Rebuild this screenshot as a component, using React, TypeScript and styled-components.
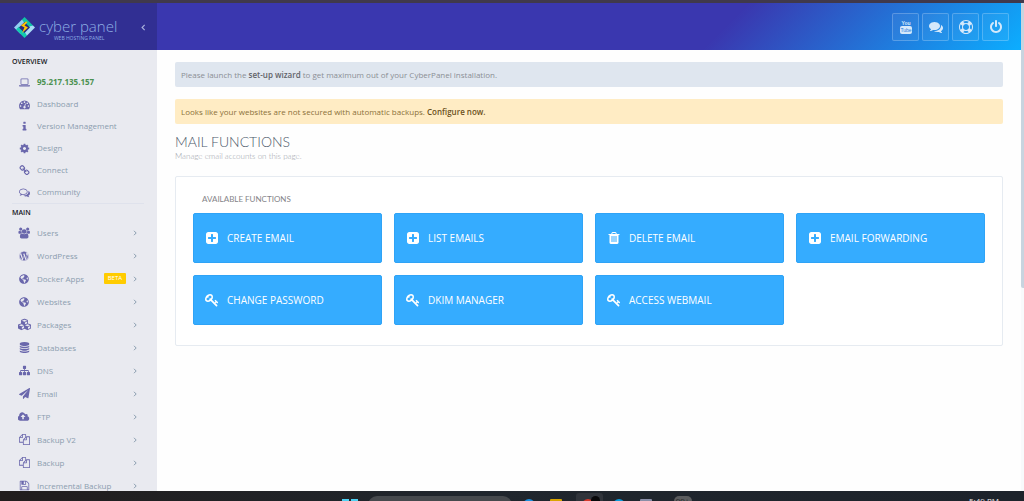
import React from "react";
import styled, { createGlobalStyle } from "styled-components";
import { FaCubes, FaGlobeAmericas, FaWordpress } from "react-icons/fa";

const GlobalStyle = createGlobalStyle`
  *, *::before, *::after { box-sizing: border-box; }
  body {
    margin: 0;
    background: #fefefe;
    font-family: "Open Sans", "Liberation Sans", sans-serif;
    font-size: 8px;
    line-height: 12px;
  }
  h1, h2, h3, p, ul { margin: 0; padding: 0; }
  ul { list-style: none; }
  a { color: inherit; text-decoration: none; }
  svg { display: block; flex: none; }
`;

/* ---------- icons ---------- */

const paths = {
  laptop:
    "M416 1280q-66 0-113-47t-47-113v-704q0-66 47-113t113-47h960q66 0 113 47t47 113v704q0 66-47 113t-113 47h-960zm-32-864v704q0 13 9.5 22.5t22.5 9.5h960q13 0 22.5-9.5t9.5-22.5v-704q0-13-9.5-22.5t-22.5-9.5h-960q-13 0-22.5 9.5t-9.5 22.5zM1632 1344h160v96q0 40-47 68t-113 28h-1472q-66 0-113-28t-47-68v-96h1632z",
  gauge:
    "M384 1152q0-53-37.5-90.5t-90.5-37.5-90.5 37.5-37.5 90.5 37.5 90.5 90.5 37.5 90.5-37.5 37.5-90.5zm192-448q0-53-37.5-90.5t-90.5-37.5-90.5 37.5-37.5 90.5 37.5 90.5 90.5 37.5 90.5-37.5 37.5-90.5zm428 481l101-382q6-26-7.5-48.5t-38.5-29.5-48 6.5-30 39.5l-101 382q-60 5-107 43.5t-63 98.5q-20 77 20 146t117 89 146-20 89-117q16-60-6-117t-72-91zm660-33q0-53-37.5-90.5t-90.5-37.5-90.5 37.5-37.5 90.5 37.5 90.5 90.5 37.5 90.5-37.5 37.5-90.5zm-640-640q0-53-37.5-90.5t-90.5-37.5-90.5 37.5-37.5 90.5 37.5 90.5 90.5 37.5 90.5-37.5 37.5-90.5zm448 192q0-53-37.5-90.5t-90.5-37.5-90.5 37.5-37.5 90.5 37.5 90.5 90.5 37.5 90.5-37.5 37.5-90.5zm320 448q0 261-141 483-19 29-54 29h-1402q-35 0-54-29-141-221-141-483 0-182 71-348t191-286 286-191 348-71 348 71 286 191 191 286 71 348z",
  info:
    "M1216 1344v128q0 26-19 45t-45 19h-512q-26 0-45-19t-19-45v-128q0-26 19-45t45-19h64v-384h-64q-26 0-45-19t-19-45v-128q0-26 19-45t45-19h384q26 0 45 19t19 45v576h64q26 0 45 19t19 45zm-128-1152v192q0 26-19 45t-45 19h-256q-26 0-45-19t-19-45v-192q0-26 19-45t45-19h256q26 0 45 19t19 45z",
  cog:
    "M1152 896q0-106-75-181t-181-75-181 75-75 181 75 181 181 75 181-75 75-181zm512-109v222q0 12-8 23t-20 13l-185 28q-19 54-39 91 35 50 107 138 10 12 10 25t-9 23q-27 37-99 108t-94 71q-12 0-26-9l-138-108q-44 23-91 38-16 136-29 186-7 28-36 28h-222q-14 0-24.5-8.5t-11.5-21.5l-28-184q-49-16-90-37l-141 107q-10 9-25 9-14 0-25-11-126-114-165-168-7-10-7-23 0-12 8-23 15-21 51-66.5t54-70.5q-27-50-41-99l-183-27q-13-2-21-12.5t-8-23.5v-222q0-12 8-23t19-13l186-28q14-46 39-92-40-57-107-138-10-12-10-24 0-10 9-23 26-36 98.5-107.5t94.5-71.5q13 0 26 10l138 107q44-23 91-38 16-136 29-186 7-28 36-28h222q14 0 24.5 8.5t11.5 21.5l28 184q49 16 90 37l142-107q9-9 24-9 13 0 25 10 129 119 165 170 7 8 7 22 0 12-8 23-15 21-51 66.5t-54 70.5q26 50 41 98l183 28q13 2 21 12.5t8 23.5z",
  link:
    "M1520 1216q0-40-28-68l-208-208q-28-28-68-28-42 0-72 32 3 3 19 18.5t21.5 21.5 15 19 13 25.5 3.5 27.5q0 40-28 68t-68 28q-15 0-27.5-3.5t-25.5-13-19-15-21.5-21.5-18.5-19q-33 31-33 73 0 40 28 68l206 207q27 27 68 27 40 0 68-26l147-146q28-28 28-67zm-703-705q0-40-28-68l-206-207q-28-28-68-28-39 0-68 27l-147 146q-28 28-28 67 0 40 28 68l208 208q27 27 68 27 42 0 72-31-3-3-19-18.5t-21.5-21.5-15-19-13-25.5-3.5-27.5q0-40 28-68t68-28q15 0 27.5 3.5t25.5 13 19 15 21.5 21.5 18.5 19q33-31 33-73zm895 705q0 120-85 203l-147 146q-83 83-203 83-121 0-204-85l-206-207q-83-83-83-203 0-123 88-209l-88-88q-86 88-208 88-120 0-204-84l-208-208q-84-84-84-204t85-203l147-146q83-83 203-83 121 0 204 85l206 207q83 83 83 203 0 123-88 209l88 88q86-88 208-88 120 0 204 84l208 208q84 84 84 204z",
  commentsOutline:
    "M704 384q-153 0-286 52t-211.5 141-78.5 191q0 82 53 158t149 132l97 56-35 84q34-20 62-39l44-31 53 10q78 14 153 14 153 0 286-52t211.5-141 78.5-191-78.5-191-211.5-141-286-52zm0-128q191 0 353.5 68.5t256.5 186.5 94 257-94 257-256.5 186.5-353.5 68.5q-86 0-176-16-124 88-278 128-36 9-86 16h-3q-11 0-20.5-8t-11.5-21q-1-3-1-6.5t.5-6.5 2-6l2.5-5 3.5-5.5 4-5 4.5-5 4-4.5q5-6 23-25t26-29.5 22.5-29 25-38.5 20.5-44q-124-72-195-177t-71-224q0-139 94-257t256.5-186.5 353.5-68.5zm822 1169q10 24 20.5 44t25 38.5 22.5 29 26 29.5 23 25q1 1 4 4.5t4.5 5 4 5 3.5 5.5l2.5 5 2 6 .5 6.5-1 6.5q-3 14-13 22t-22 7q-50-7-86-16-154-40-278-128-90 16-176 16-271 0-472-132 58 4 88 4 161 0 309-45t264-129q125-92 192-212t67-254q0-77-23-152 129 71 204 178t75 230q0 120-71 224.5t-195 176.5z",
  comments:
    "M1408 768q0 139-94 257t-256.5 186.5-353.5 68.5q-86 0-176-16-124 88-278 128-36 9-86 16h-3q-11 0-20.5-8t-11.5-21q-1-3-1-6.5t.5-6.5 2-6l2.5-5 3.5-5.5 4-5 4.5-5 4-4.5q5-6 23-25t26-29.5 22.5-29 25-38.5 20.5-44q-124-72-195-177t-71-224q0-139 94-257t256.5-186.5 353.5-68.5 353.5 68.5 256.5 186.5 94 257zm384 256q0 120-71 224.5t-195 176.5q10 24 20.5 44t25 38.5 22.5 29 26 29.5 23 25q1 1 4 4.5t4.5 5 4 5 3.5 5.5l2.5 5 2 6 .5 6.5-1 6.5q-3 14-13 22t-22 7q-50-7-86-16-154-40-278-128-90 16-176 16-271 0-472-132 58 4 88 4 161 0 309-45t264-129q125-92 192-212t67-254q0-77-23-152 129 71 204 178t75 230z",
  users:
    "M657 896q-162 5-265 128h-134q-82 0-138-40.5t-56-118.5q0-353 124-353 6 0 43.5 21t97.5 42.5 119 21.5q67 0 133-23-5 37-5 66 0 139 81 256zm1071 637q0 120-73 189.5t-194 69.5h-874q-121 0-194-69.5t-73-189.5q0-53 3.5-103.5t14-109 26.5-108.5 43-97.5 62-81 85.5-53.5 111.5-20q10 0 43 21.5t73 48 107 48 135 21.5 135-21.5 107-48 73-48 43-21.5q61 0 111.5 20t85.5 53.5 62 81 43 97.5 26.5 108.5 14 109 3.5 103.5zm-1024-1277q0 106-75 181t-181 75-181-75-75-181 75-181 181-75 181 75 75 181zm704 384q0 159-112.5 271.5t-271.5 112.5-271.5-112.5-112.5-271.5 112.5-271.5 271.5-112.5 271.5 112.5 112.5 271.5zm576 225q0 78-56 118.5t-138 40.5h-134q-103-123-265-128 81-117 81-256 0-29-5-66 66 23 133 23 59 0 119-21.5t97.5-42.5 43.5-21q124 0 124 353zm-128-609q0 106-75 181t-181 75-181-75-75-181 75-181 181-75 181 75 75 181z",
  database:
    "M896 768q237 0 443-43t325-127v170q0 69-103 128t-280 93.5-385 34.5-385-34.5-280-93.5-103-128v-170q119 84 325 127t443 43zm0 768q237 0 443-43t325-127v170q0 69-103 128t-280 93.5-385 34.5-385-34.5-280-93.5-103-128v-170q119 84 325 127t443 43zm0-384q237 0 443-43t325-127v170q0 69-103 128t-280 93.5-385 34.5-385-34.5-280-93.5-103-128v-170q119 84 325 127t443 43zm0-1152q208 0 385 34.5t280 93.5 103 128v128q0 69-103 128t-280 93.5-385 34.5-385-34.5-280-93.5-103-128v-128q0-69 103-128t280-93.5 385-34.5z",
  sitemap:
    "M1792 1248v320q0 40-28 68t-68 28h-320q-40 0-68-28t-28-68v-320q0-40 28-68t68-28h96v-192h-512v192h96q40 0 68 28t28 68v320q0 40-28 68t-68 28h-320q-40 0-68-28t-28-68v-320q0-40 28-68t68-28h96v-192h-512v192h96q40 0 68 28t28 68v320q0 40-28 68t-68 28h-320q-40 0-68-28t-28-68v-320q0-40 28-68t68-28h96v-192q0-52 38-90t90-38h512v-192h-96q-40 0-68-28t-28-68v-320q0-40 28-68t68-28h320q40 0 68 28t28 68v320q0 40-28 68t-68 28h-96v192h512q52 0 90 38t38 90v192h96q40 0 68 28t28 68z",
  plane:
    "M1764 11q33 24 27 64l-256 1536q-5 29-32 45-14 8-31 8-11 0-24-5l-453-185-242 295q-18 23-49 23-13 0-22-4-19-7-30.5-23.5t-11.5-36.5v-349l864-1059-1069 925-395-162q-37-14-40-55-2-40 32-59l1664-960q15-9 32-9 20 0 36 11z",
  cloud:
    "M1216 864q0-14-9-23l-352-352q-9-9-23-9t-23 9l-351 351q-10 12-10 24 0 14 9 23t23 9h224v352q0 13 9.5 22.5t22.5 9.5h192q13 0 22.5-9.5t9.5-22.5v-352h224q13 0 22.5-9.5t9.5-22.5zm640 288q0 159-112.5 271.5t-271.5 112.5h-1088q-185 0-316.5-131.5t-131.5-316.5q0-130 70-240t188-165q-2-30-2-43 0-212 150-362t362-150q156 0 285.5 87t188.5 231q71-62 166-62 106 0 181 75t75 181q0 76-41 138 130 31 213.5 135.5t83.5 238.5z",
  files:
    "M1696 384q40 0 68 28t28 68v1216q0 40-28 68t-68 28h-960q-40 0-68-28t-28-68v-288h-544q-40 0-68-28t-28-68v-672q0-40 20-88t48-76l408-408q28-28 76-48t88-20h416q40 0 68 28t28 68v328q68-40 128-40h416zm-544 213l-299 299h299v-299zm-640-384l-299 299h299v-299zm196 647l316-316v-416h-384v416q0 40-28 68t-68 28h-416v640h512v-256q0-40 20-88t48-76zm956 804v-1152h-384v416q0 40-28 68t-68 28h-416v640h896z",
  floppy:
    "M512 1536h768v-384h-768v384zm896 0h128v-896q0-14-10-38.5t-20-34.5l-281-281q-10-10-34-20t-39-10v416q0 40-28 68t-68 28h-576q-40 0-68-28t-28-68v-416h-128v1280h128v-416q0-40 28-68t68-28h832q40 0 68 28t28 68v416zm-384-928v-320q0-13-9.5-22.5t-22.5-9.5h-192q-13 0-22.5 9.5t-9.5 22.5v320q0 13 9.5 22.5t22.5 9.5h192q13 0 22.5-9.5t9.5-22.5zm640 32v928q0 40-28 68t-68 28h-1344q-40 0-68-28t-28-68v-1344q0-40 28-68t68-28h928q40 0 88 20t76 48l280 280q28 28 48 76t20 88z",
  ring:
    "M896 0q182 0 348 71t286 191 191 286 71 348-71 348-191 286-286 191-348 71-348-71-286-191-191-286-71-348 71-348 191-286 286-191 348-71zm0 128q-190 0-361 90l194 194q82-28 167-28t167 28l194-194q-171-90-361-90zm-678 1129l194-194q-28-82-28-167t28-167l-194-194q-90 171-90 361t90 361zm678 407q190 0 361-90l-194-194q-82 28-167 28t-167-28l-194 194q171 90 361 90zm0-384q159 0 271.5-112.5t112.5-271.5-112.5-271.5-271.5-112.5-271.5 112.5-112.5 271.5 112.5 271.5 271.5 112.5zm484-217l194 194q90-171 90-361t-90-361l-194 194q28 82 28 167t-28 167z",
  power:
    "M1664 896q0 156-61 298t-164 245-245 164-298 61-298-61-245-164-164-245-61-298q0-182 80.5-343t226.5-270q43-32 95.5-25t83.5 50q32 42 24.5 94.5t-49.5 84.5q-98 74-151.5 181t-53.5 228q0 104 40.5 198.5t109.5 163.5 163.5 109.5 198.5 40.5 198.5-40.5 163.5-109.5 109.5-163.5 40.5-198.5q0-121-53.5-228t-151.5-181q-42-32-49.5-84.5t24.5-94.5q31-43 84-50t95 25q146 109 226.5 270t80.5 343zm-640-768v640q0 52-38 90t-90 38-90-38-38-90v-640q0-52 38-90t90-38 90 38 38 90z",
  plus:
    "M1408 960v-128q0-26-19-45t-45-19h-320v-320q0-26-19-45t-45-19h-128q-26 0-45 19t-19 45v320h-320q-26 0-45 19t-19 45v128q0 26 19 45t45 19h320v320q0 26 19 45t45 19h128q26 0 45-19t19-45v-320h320q26 0 45-19t19-45zm256-544v960q0 119-84.5 203.5t-203.5 84.5h-960q-119 0-203.5-84.5t-84.5-203.5v-960q0-119 84.5-203.5t203.5-84.5h960q119 0 203.5 84.5t84.5 203.5z",
  trash:
    "M704 1376v-704q0-14-9-23t-23-9h-64q-14 0-23 9t-9 23v704q0 14 9 23t23 9h64q14 0 23-9t9-23zm256 0v-704q0-14-9-23t-23-9h-64q-14 0-23 9t-9 23v704q0 14 9 23t23 9h64q14 0 23-9t9-23zm256 0v-704q0-14-9-23t-23-9h-64q-14 0-23 9t-9 23v704q0 14 9 23t23 9h64q14 0 23-9t9-23zm-544-992h448l-48-117q-7-9-17-11h-317q-10 2-17 11zm928 32v64q0 14-9 23t-23 9h-96v948q0 83-47 143.5t-113 60.5h-832q-66 0-113-58.5t-47-141.5v-952h-96q-14 0-23-9t-9-23v-64q0-14 9-23t23-9h309l70-167q15-37 54-63t79-26h320q40 0 79 26t54 63l70 167h309q14 0 23 9t9 23z",
  key:
    "M832 512q0-80-56-136t-136-56-136 56-56 136q0 42 19 83-41-19-83-19-80 0-136 56t-56 136 56 136 136 56 136-56 56-136q0-42-19-83 41 19 83 19 80 0 136-56t56-136zm851 704q0 17-49 66t-66 49q-9 0-28.5-16t-36.5-33-38.5-40-24.5-26l-96 96 220 220q28 28 28 68 0 42-39 81t-81 39q-40 0-68-28l-671-671q-176 131-365 131-163 0-265.5-102.5t-102.5-265.5q0-160 95-313t248-248 313-95q163 0 265.5 102.5t102.5 265.5q0 189-131 365l355 355 96-96q-3-3-26-24.5t-40-38.5-33-36.5-16-28.5q0-17 49-66t66-49q13 0 23 10 6 6 46 44.5t82 79.5 86.5 86 73 78 28.5 41z",
};

type IconName = keyof typeof paths;

const Icon = ({ name, size = 11 }: { name: IconName; size?: number }) => (
  <svg
    width={size}
    height={size}
    viewBox={name === "users" || name === "cloud" ? "0 0 1984 1792" : "0 0 1792 1792"}
    fill="currentColor"
    aria-hidden="true"
  >
    <path d={paths[name]} />
  </svg>
);

const Chevron = ({ left = false, size = 6 }: { left?: boolean; size?: number }) => (
  <svg width={size} height={size} viewBox="0 0 6 6" fill="none" stroke="currentColor" aria-hidden="true">
    <path d={left ? "M4 .8 1.8 3 4 5.2" : "M2 .8 4.2 3 2 5.2"} />
  </svg>
);

const LogoMark = () => (
  <svg width="23" height="23" viewBox="0 0 46 46" aria-hidden="true">
    <path d="M2 23 18 7 25 12 13 24 20 31 15 36z" fill="#93cdf2" />
    <path d="M18 7 23 2 40 19 34 25 22 13z" fill="#0fc3a6" />
    <path d="M40 19 44 23 27 40 20 34 33 21z" fill="#a9dcf5" />
    <path d="M6 27 12 21 24 33 28 39 23 44z" fill="#12cbb0" />
    <path d="M23 12 34 23 23 34 12 23z" fill="#2c2c7c" />
    <path d="M26 11 16 19 23 23 18 34 30 23 23 19 29 12z" fill="#ffc400" />
  </svg>
);

const YoutubeIcon = () => (
  <svg width="12" height="14" viewBox="0 0 12 14" fill="currentColor" aria-hidden="true">
    <text x="6" y="5" textAnchor="middle" fontFamily="Liberation Sans Narrow, Liberation Sans, sans-serif" fontWeight="700" fontSize="5">
      You
    </text>
    <rect x="0" y="6" width="12" height="8" rx="2" />
    <text x="6" y="12" textAnchor="middle" fontFamily="Liberation Sans Narrow, Liberation Sans, sans-serif" fontSize="5" fill="#2b7fdd">
      Tube
    </text>
  </svg>
);

/* ---------- frame ---------- */

const Screen = styled.div`
  display: flex;
  flex-direction: column;
  height: 100vh;
  overflow: hidden;
`;

const WindowEdge = styled.div`
  flex: none;
  height: 3px;
  background: #40394c;
`;

const Page = styled.div`
  flex: 1;
  min-height: 0;
  display: grid;
  grid-template-columns: 157px minmax(0, 1fr) 3px;
  overflow: hidden;
`;

const ScrollTrack = styled.div`
  background: #f8fafb;
`;

const ScrollThumb = styled.div`
  height: 285px;
  border-radius: 0 0 0 2px;
  background: #c8d4df;
`;

/* ---------- sidebar ---------- */

const Sidebar = styled.aside`
  background: #e9eaf0;
  overflow: hidden;
`;

const Brand = styled.div`
  display: flex;
  align-items: center;
  height: 47px;
  padding: 2px 10px 0 13px;
  background: #312f93;
  color: #8eaee3;
`;

const BrandText = styled.a`
  display: flex;
  flex-direction: column;
  flex: 1;
  margin-left: 3px;
  padding-top: 2px;
`;

const BrandName = styled.span`
  font-size: 15px;
  line-height: 20px;
  font-weight: 300;
  white-space: nowrap;
`;

const BrandTag = styled.span`
  padding-left: 15px;
  font-size: 5px;
  line-height: 5px;
`;

const CollapseButton = styled.button`
  display: flex;
  padding: 0;
  border: 0;
  background: none;
  color: #a9b1dc;
`;

const Group = styled.section`
  margin: 0 13px 0 12px;
  & + & {
    border-top: 1px solid #dfe2ec;
  }
`;

const GroupTitle = styled.h3<{ $first?: boolean }>`
  padding-top: ${(p) => (p.$first ? "6px" : "3px")};
  margin-bottom: ${(p) => (p.$first ? "3px" : "2px")};
  font-size: 7px;
  font-weight: 600;
  line-height: 12px;
  color: #16161c;
`;

const NavLink = styled.a<{ $tall?: boolean; $host?: boolean }>`
  display: flex;
  align-items: center;
  height: ${(p) => (p.$tall ? "23px" : "22px")};
  padding-right: 6px;
  color: ${(p) => (p.$host ? "#4b9150" : "#8b9daf")};
  font-weight: ${(p) => (p.$host ? 700 : 400)};
`;

const NavIcon = styled.span`
  display: flex;
  justify-content: center;
  width: 25px;
  padding-right: 1px;
  color: #6a67ac;
`;

const NavLabel = styled.span`
  flex: 1;
  white-space: nowrap;
`;

const Beta = styled.span`
  margin-right: 6px;
  padding: 0 4px;
  border-radius: 1px;
  background: #ffcc00;
  color: #fff;
  font-size: 6px;
  line-height: 11px;
`;

/* ---------- main column ---------- */

const Column = styled.div`
  min-width: 0;
`;

const TopBar = styled.header`
  display: flex;
  align-items: center;
  justify-content: flex-end;
  gap: 3px;
  height: 47px;
  padding: 0 12px;
  background: linear-gradient(135deg, #3a37af 0%, #3a37af 65%, #0caeff 100%);
`;

const TopButton = styled.button`
  display: flex;
  align-items: center;
  justify-content: center;
  width: 27px;
  height: 28px;
  padding: 0;
  border: 1px solid rgba(255, 255, 255, 0.22);
  border-radius: 2px;
  background: rgba(255, 255, 255, 0.05);
  color: #d5e9fb;
`;

const Content = styled.main`
  padding: 12px 18px 0;
`;

const Alert = styled.p<{ $warning?: boolean }>`
  margin-bottom: 12px;
  padding: 6px;
  border-radius: 2px;
  line-height: 13px;
  background: ${(p) => (p.$warning ? "#ffecc4" : "#dfe6ef")};
  color: ${(p) => (p.$warning ? "#8b713a" : "#8b8f95")};
  a {
    font-weight: 600;
    color: ${(p) => (p.$warning ? "#6b5020" : "#5f6369")};
  }
`;

const Title = styled.h1`
  font-family: Lato, "Open Sans", sans-serif;
  font-size: 14px;
  font-weight: 300;
  line-height: 12px;
  color: #4d5a6b;
`;

const Subtitle = styled.p`
  font-family: Lato, "Open Sans", sans-serif;
  font-weight: 300;
  line-height: 16px;
  color: #9ba1a9;
`;

const Panel = styled.section`
  margin-top: 12px;
  padding: 16px 17px 20px;
  border: 1px solid #e6ebf1;
  border-radius: 2px;
  background: #fff;
`;

const PanelTitle = styled.h2`
  padding: 0 9px 8px;
  font-family: Lato, "Open Sans", sans-serif;
  font-size: 8px;
  font-weight: 400;
  line-height: 12px;
  color: #858488;
`;

const Tiles = styled.div`
  display: grid;
  grid-template-columns: repeat(4, minmax(0, 1fr));
  gap: 12px;
`;

const Tile = styled.a`
  display: flex;
  align-items: center;
  gap: 8px;
  height: 50px;
  padding: 0 11px 1px;
  border: 1px solid #2fa3f6;
  border-radius: 2px;
  background: #35acff;
  color: #fff;
  font-size: 10px;
`;

/* ---------- desktop taskbar ---------- */

const Taskbar = styled.footer`
  flex: none;
  display: flex;
  align-items: flex-start;
  height: 10px;
  overflow: hidden;
  background: linear-gradient(90deg, #211d1d 0%, #20262d 45%, #1d232b 100%);
`;

const Apps = styled.div`
  flex: 1;
  display: flex;
  align-items: flex-start;
  justify-content: center;
  gap: 15px;
  padding: 2px 0 0 64px;
`;

const AppDot = styled.span<{ $color: string; $round?: boolean }>`
  flex: none;
  width: 12px;
  height: 12px;
  margin-top: 6px;
  border-radius: ${(p) => (p.$round ? "6px" : "1px")};
  background: ${(p) => p.$color};
`;

const StartLogo = styled.span`
  width: 16px;
  height: 16px;
  margin-top: 6px;
  background: linear-gradient(90deg, #4fd0f2 7px, transparent 7px, transparent 9px, #4fd0f2 9px);
`;

const SearchPill = styled.span`
  width: 144px;
  height: 18px;
  margin: 3px -4px 0 -5px;
  border-radius: 9px;
  background: #46494d;
`;

const ActiveApp = styled.span`
  display: flex;
  width: 27px;
  height: 20px;
  margin: 0 -5px 0 -1px;
  padding: 0 6px;
  border-radius: 3px;
  background: #30343b;
`;

const ActiveBadge = styled.span`
  flex: none;
  width: 9px;
  height: 9px;
  margin: 3px 0 0 -3px;
  border-radius: 5px;
  background: #08080a;
`;

const CountBadge = styled.span`
  width: 18px;
  height: 12px;
  margin: 3px 0 0 7px;
  border-radius: 5px;
  background: #5b5c5e;
  color: #1d1f22;
  font-size: 8px;
  line-height: 9px;
  text-align: center;
`;

const Clock = styled.time`
  width: 55px;
  padding-top: 4px;
  color: #e8e8e8;
  font-size: 8px;
`;

/* ---------- data ---------- */

const overview: { icon: IconName; label: string; host?: boolean }[] = [
  { icon: "laptop", label: "95.217.135.157", host: true },
  { icon: "gauge", label: "Dashboard" },
  { icon: "info", label: "Version Management" },
  { icon: "cog", label: "Design" },
  { icon: "link", label: "Connect" },
  { icon: "commentsOutline", label: "Community" },
];

const mainMenu: { icon: React.ReactNode; label: string; beta?: boolean }[] = [
  { icon: <Icon name="users" size={12} />, label: "Users" },
  { icon: <FaWordpress size={10} />, label: "WordPress" },
  { icon: <FaGlobeAmericas size={10} />, label: "Docker Apps", beta: true },
  { icon: <FaGlobeAmericas size={10} />, label: "Websites" },
  { icon: <FaCubes size={13} />, label: "Packages" },
  { icon: <Icon name="database" />, label: "Databases" },
  { icon: <Icon name="sitemap" />, label: "DNS" },
  { icon: <Icon name="plane" />, label: "Email" },
  { icon: <Icon name="cloud" size={12} />, label: "FTP" },
  { icon: <Icon name="files" />, label: "Backup V2" },
  { icon: <Icon name="files" />, label: "Backup" },
  { icon: <Icon name="floppy" />, label: "Incremental Backup" },
];

const tiles: { icon: IconName; label: string }[] = [
  { icon: "plus", label: "CREATE EMAIL" },
  { icon: "plus", label: "LIST EMAILS" },
  { icon: "trash", label: "DELETE EMAIL" },
  { icon: "plus", label: "EMAIL FORWARDING" },
  { icon: "key", label: "CHANGE PASSWORD" },
  { icon: "key", label: "DKIM MANAGER" },
  { icon: "key", label: "ACCESS WEBMAIL" },
];

export default function App() {
  return (
    <Screen>
      <GlobalStyle />
      <WindowEdge />
      <Page>
        <Sidebar>
          <Brand>
            <LogoMark />
            <BrandText href="#">
              <BrandName>cyber panel</BrandName>
              <BrandTag>WEB HOSTING PANEL</BrandTag>
            </BrandText>
            <CollapseButton aria-label="Collapse sidebar">
              <Chevron left size={7} />
            </CollapseButton>
          </Brand>
          <nav>
            <Group>
              <GroupTitle $first>OVERVIEW</GroupTitle>
              <ul>
                {overview.map((item) => (
                  <li key={item.label}>
                    <NavLink href="#" $host={item.host}>
                      <NavIcon>
                        <Icon name={item.icon} />
                      </NavIcon>
                      <NavLabel>{item.label}</NavLabel>
                    </NavLink>
                  </li>
                ))}
              </ul>
            </Group>
            <Group>
              <GroupTitle>MAIN</GroupTitle>
              <ul>
                {mainMenu.map((item) => (
                  <li key={item.label}>
                    <NavLink href="#" $tall>
                      <NavIcon>{item.icon}</NavIcon>
                      <NavLabel>{item.label}</NavLabel>
                      {item.beta && <Beta>BETA</Beta>}
                      <Chevron />
                    </NavLink>
                  </li>
                ))}
              </ul>
            </Group>
          </nav>
        </Sidebar>

        <Column>
          <TopBar>
            <TopButton aria-label="YouTube">
              <YoutubeIcon />
            </TopButton>
            <TopButton aria-label="Forums">
              <Icon name="comments" size={14} />
            </TopButton>
            <TopButton aria-label="Support">
              <Icon name="ring" size={14} />
            </TopButton>
            <TopButton aria-label="Log out">
              <Icon name="power" size={14} />
            </TopButton>
          </TopBar>
          <Content>
            <Alert>
              Please launch the <a href="#">set-up wizard</a> to get maximum out of your CyberPanel installation.
            </Alert>
            <Alert $warning>
              Looks like your websites are not secured with automatic backups. <a href="#">Configure now.</a>
            </Alert>
            <Title>MAIL FUNCTIONS</Title>
            <Subtitle>Manage email accounts on this page.</Subtitle>
            <Panel>
              <PanelTitle>AVAILABLE FUNCTIONS</PanelTitle>
              <Tiles>
                {tiles.map((tile) => (
                  <Tile href="#" key={tile.label}>
                    <Icon name={tile.icon} size={14} />
                    {tile.label}
                  </Tile>
                ))}
              </Tiles>
            </Panel>
          </Content>
        </Column>

        <ScrollTrack>
          <ScrollThumb />
        </ScrollTrack>
      </Page>

      <Taskbar>
        <Apps>
          <StartLogo />
          <SearchPill />
          <AppDot $color="#1b8fe0" $round />
          <AppDot $color="#d9a400" />
          <ActiveApp>
            <AppDot $color="#d8392c" $round />
            <ActiveBadge />
          </ActiveApp>
          <AppDot $color="#0a9bdc" $round />
          <AppDot $color="#8a8fa8" />
          <CountBadge>99+</CountBadge>
        </Apps>
        <Clock>5:49 PM</Clock>
      </Taskbar>
    </Screen>
  );
}
